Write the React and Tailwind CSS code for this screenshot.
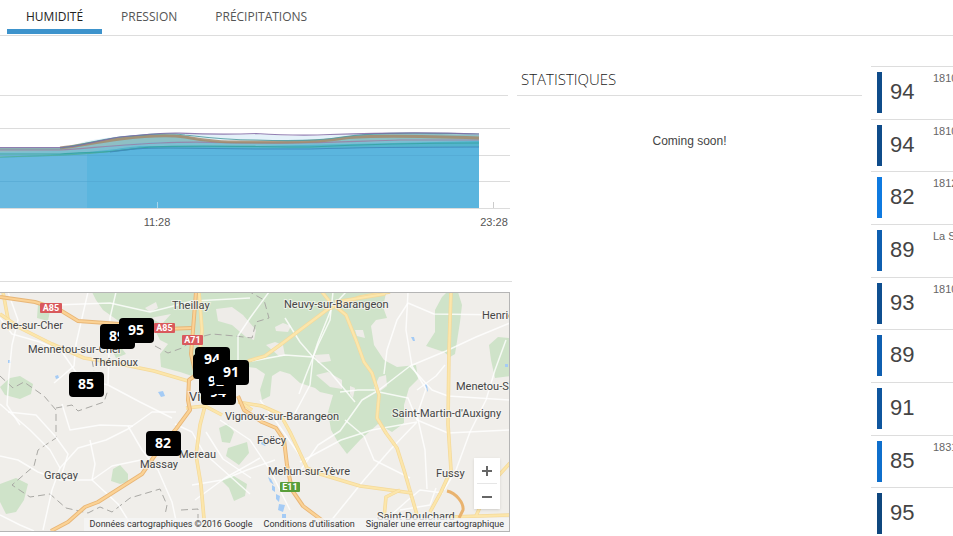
import clsx from 'clsx'

const TABS = ['Humidité', 'Pression', 'Précipitations']

const READINGS = [
  { value: 94, station: '18100 Vierzon', color: 'bg-[#0f4c8a]' },
  { value: 94, station: '18100 Vierzon', color: 'bg-[#0f4c8a]' },
  { value: 82, station: '18120 Massay', color: 'bg-[#0f7ae0]' },
  { value: 89, station: 'La Sologne', color: 'bg-[#0f5fb0]' },
  { value: 93, station: '18100 Vierzon', color: 'bg-[#0f4f90]' },
  { value: 89, station: '', color: 'bg-[#0f5fb0]' },
  { value: 91, station: '', color: 'bg-[#0f569e]' },
  { value: 85, station: '18310 Genouilly', color: 'bg-[#0f6fcc]' },
  { value: 95, station: '', color: 'bg-[#0f477e]' },
]

// Drawn in order, the last ones end up on top
const PINS = [
  { x: 193, y: 354, value: 93 },
  { x: 201, y: 380, value: 94 },
  { x: 199, y: 369, value: 92 },
  { x: 195, y: 347, value: 94 },
  { x: 214, y: 360, value: 91 },
  { x: 100, y: 324, value: 89 },
  { x: 119, y: 318, value: 95 },
  { x: 69, y: 372, value: 85 },
  { x: 146, y: 431, value: 82 },
]

const PLACES = [
  { x: 172, y: 309, name: 'Theillay' },
  { x: 284, y: 308, name: 'Neuvy-sur-Barangeon' },
  { x: 482, y: 319, name: 'Henrichemont' },
  { x: 1, y: 329, name: 'che-sur-Cher' },
  { x: 28, y: 353, name: 'Mennetou-sur-Cher' },
  { x: 93, y: 366, name: 'Thénioux' },
  { x: 456, y: 390, name: 'Menetou-Salon' },
  { x: 392, y: 417, name: "Saint-Martin-d'Auxigny" },
  { x: 225, y: 420, name: 'Vignoux-sur-Barangeon' },
  { x: 257, y: 444, name: 'Foëcy' },
  { x: 179, y: 458, name: 'Mereau' },
  { x: 140, y: 468, name: 'Massay' },
  { x: 44, y: 479, name: 'Graçay' },
  { x: 268, y: 475, name: 'Mehun-sur-Yèvre' },
  { x: 436, y: 477, name: 'Fussy' },
  { x: 377, y: 520, name: 'Saint-Doulchard' },
]

const SHIELDS = [
  { x: 40, y: 303, w: 22, name: 'A85', color: '#d9595c' },
  { x: 154, y: 323, w: 21, name: 'A85', color: '#d9595c' },
  { x: 182, y: 335, w: 21, name: 'A71', color: '#d9595c' },
  { x: 280, y: 482, w: 20, name: 'E11', color: '#5a9e3a' },
]

const FORESTS = [
  'M92 292 L190 292 L430 292 L386 293 L383 307 L387 318 L376 320 L371 326 L374 345 L384 360 L397 367 L416 365 L418 379 L409 388 L404 405 L404 423 L392 432 L378 424 L360 440 L347 454 L338 442 L331 430 L328 412 L333 395 L320 392 L315 388 L300 383 L290 374 L280 371 L272 376 L270 396 L262 400 L260 390 L265 374 L256 368 L240 366 L215 375 L195 377 L180 372 L161 367 L160 354 L168 344 L160 340 L155 330 L145 326 L120 322 L103 310 L96 300 Z',
  'M447 292 L458 292 L462 305 L460 322 L455 354 L450 357 L444 352 L426 346 L435 332 L435 310 L442 297 Z',
  'M510 338 L498 337 L489 345 L491 360 L495 378 L510 376 Z',
  'M0 387 L10 378 L20 376 L33 384 L31 394 L20 399 L5 395 Z',
  'M0 484 L16 478 L28 484 L24 500 L16 512 L6 514 L0 502 Z',
  'M113 469 L120 465 L128 474 L128 482 L120 484 L111 481 Z',
  'M219 428 L228 424 L234 432 L230 443 L222 442 Z M228 448 L247 442 L249 453 L239 465 L226 456 Z',
  'M221 480 L232 475 L247 484 L245 496 L234 501 L229 488 Z',
  'M38 304 L50 311 L48 321 L37 318 Z M111 348 L120 346 L126 354 L116 358 Z',
]

const CLEARINGS = [
  'M216 309 L232 307 L243 315 L256 330 L254 340 L246 337 L232 325 L218 321 Z',
  'M145 308 L156 302 L158 308 L150 312 Z',
  'M275 327 L283 323 L291 326 L288 332 L276 331 Z',
  'M266 345 L275 342 L283 345 L285 356 L279 356 L272 350 Z',
  'M314 355 L329 354 L331 361 L318 363 Z',
  'M316 375 L328 372 L342 380 L342 389 L330 387 Z',
  'M355 330 L363 330 L365 338 L357 336 Z',
  'M350 386 L355 388 L353 398 L350 394 Z',
  'M379 377 L386 375 L387 386 L379 392 L374 388 Z',
  'M150 318 L171 314 L162 324 Z',
]

const LOCAL_ROADS = [
  'M0 318 L12 334 L40 342 L62 352 L80 378 L108 385 L140 402 L172 418',
  'M0 404 L30 430 L50 450 L60 468 L52 490 L43 530',
  'M60 468 L78 448 L106 440 L128 429 L152 412 L176 412',
  'M128 426 L142 450 L158 470 L172 502 L178 530',
  'M0 456 L18 460 L38 472 L60 480 L92 480 L118 504 L133 528',
  'M92 480 L112 466 L141 460',
  'M0 515 L20 525 L34 531 M60 480 L68 454 L55 436 L36 415 L8 412',
  'M88 292 L82 318 L76 344 L74 366 L54 383 M116 292 L110 318 L108 384',
  'M8 292 L18 320 L12 345 L9 374 L7 405 L20 425',
  'M62 404 L70 430 L100 425 L133 426 M90 440 L95 464 L92 480',
  'M0 298 L55 305 L110 303 L150 312 L193 301 L250 298',
  'M269 292 L250 318 L238 336 L238 360 M346 292 L332 307 L318 342 L313 357 L310 385 L294 415',
  'M285 318 L300 342 L313 357 L330 372 L355 402 M252 361 L285 355 L313 357',
  'M333 292 L330 320 L318 345 L306 375 L299 394',
  'M510 323 L476 337 L446 351 L410 366 L379 390 L362 400 L340 431 L318 445 L300 471',
  'M408 292 L406 330 L412 366 L426 389 L417 415 L425 450 L427 489',
  'M408 303 L434 314 L510 315 M408 303 L397 320 L387 350 L384 374',
  'M379 392 L408 398 L417 420 L448 433 L510 430',
  'M417 422 L390 450 L364 480 L330 522 M417 422 L372 430 L341 440 L300 462',
  'M506 340 L495 370 L486 400 L470 432 L456 470 L444 490',
  'M410 366 L432 390 L448 396 L510 400 M417 390 L436 376 L445 365',
  'M220 420 L250 440 L270 470 L290 510 M195 500 L225 478 L260 458',
  'M192 485 L222 480 L247 470 L275 460 M206 432 L223 459 L251 478',
  'M340 392 L358 390 L379 390 M345 420 L364 436 L374 460 L410 478',
  'M390 516 L408 500 L420 490 L443 493 M400 510 L430 505 L436 488',
  'M175 424 L192 432 L204 453 L250 494 M260 400 L275 420 L310 470',
]

const MAIN_ROADS = [
  'M3 292 L10 330',
  'M0 314 L20 328 L52 344 L84 358 L120 364 L154 371 L188 381',
  'M199 292 L202 330 L200 350 M248 361 L265 356 L280 345 L328 309 L360 297 L390 292',
  'M335 306 L346 315 L356 340 L364 362 L372 373 L379 395 L377 418 L386 433 L397 448 L404 470 L417 515',
  'M330 302 L322 292 M335 302 L385 294',
  'M451 292 L449 350 L448 424 L451 470 L441 492 L430 512',
  'M205 406 L200 425 L196 455 L201 485 L205 530',
  'M238 402 L262 406 L280 414 L290 432 L307 468 L320 474 L360 486 L412 493',
  'M384 518 L386 497 L400 490 M510 463 L490 485 L476 516 M450 517 L510 515',
  'M186 408 L205 406 L222 415 M240 402 L252 410',
]

const HIGHWAYS = [
  'M0 297 L35 302 L60 310 L78 321 L120 324 L165 329 L192 328',
  'M196 292 L193 330 L191 354 L196 375 L189 380 L188 400 L190 410 L176 429 L160 448 L142 474 L98 502 L85 507 L68 522 L51 531',
  'M238 396 L244 410 L262 422 L276 428 L284 440 L287 465 L292 490 L303 506 L323 521',
]

const BORDERS =
  'M155 346 L168 353 L182 348 L196 338 L212 334 L235 336 L252 338 L256 322 L269 318 L264 300 L250 292 M92 360 L94 371 M0 376 L13 388 L24 382 L44 396 L56 410 L56 438 L38 450 L34 466 L12 485 L30 497 L50 494 L66 508 L88 513 L100 507 L112 512 L130 498 L160 489 L167 505 L165 515 M56 408 L72 405 L78 411 L104 402 L108 390 M181 510 L198 509 L198 520'

const HumidityChart = () => (
  <svg
    className="block h-[140px] w-full"
    viewBox="0 96 512 140"
    preserveAspectRatio="xMinYMin slice"
    role="img"
    aria-label="Humidité"
  >
    <path d="M0 128.5H510 M0 155.5H510 M0 181.5H510 M0 208.5H510" stroke="#dcdcdc" fill="none" />
    <path d="M493.5 202V208" stroke="#ccc" />

    {/* Filled area */}
    <path
      d="M0 147 L60 147 C75 146 78 143 87 141 C115 136 140 134 170 133 C200 134 225 135 256 134 C280 135 300 137 330 135 C360 133 430 132 479 134 L479 150 L0 150 Z"
      fill="#e4f1f9"
    />
    <path
      d="M0 148 L60 148 C80 147 90 141 120 137 C145 134 175 133 190 137 C210 142 225 142 250 142 C280 142 310 142 330 139 C350 136 370 133 400 133 L479 135 V208 H0 Z"
      fill="#8ebfc4"
    />
    <path
      d="M0 152 L60 151 C90 149 110 146 140 143 C170 140 200 143 256 143 C330 144 380 140 479 140 V208 H0 Z"
      fill="#7cbfd2"
    />
    <path d="M0 157 L60 154 C100 152 120 148 140 146 L256 146 L350 144 L479 141 V208 H0 Z" fill="#54b4cd" />
    <path d="M0 158 L60 156 L110 152 L140 149 L256 149 L479 147 V208 H0 Z" fill="#5bb5de" />
    <path d="M0 158 L60 156 L87 154 V208 H0 Z" fill="#69b9e0" />
    <path d="M0 155.5H479 M0 181.5H479" stroke="#4fa3cd" strokeOpacity="0.5" />
    <path d="M157.5 202V208" stroke="#a5d5ec" />

    {/* One line per station */}
    <g fill="none" strokeWidth="1.2" strokeOpacity="0.85">
      <path d="M0 157 L35 156 C80 155 100 153 140 148" stroke="#53ae9c" />
      <path d="M0 154 L60 154 C90 152 110 153 140 148 C170 144 256 147 310 147 C350 145 400 143 479 143" stroke="#35a3a0" />
      <path d="M110 152 C130 149 140 148 170 148 L256 149 L310 149 C340 148 400 147 479 147" stroke="#4188bd" />
      <path d="M0 150 L60 150 C90 148 130 144 160 143 C200 141 225 143 256 143 C320 144 360 141 400 140 L479 140" stroke="#987fa6" />
      <path d="M60 148 C80 146 90 143 120 139 C145 136 170 135 185 137 C210 142 225 142 256 142 C300 142 320 142 345 138 C370 135 420 136 479 138" stroke="#a58a6b" strokeWidth="3" />
      <path d="M60 148 C85 145 90 141 120 137 C145 135 165 132 185 135 C210 138 230 140 256 140 C310 142 330 139 350 136 C380 132 430 133 479 134" stroke="#4e9b9f" />
      <path d="M0 147.5 L60 147.5 C80 147 90 142 120 137 C140 135 160 133 175 133 C200 134 220 135 256 133.5 C280 135 300 136 330 134.5 C370 133 430 132 479 134" stroke="#8069a5" />
      <path d="M0 149 L62 149" stroke="#889999" />
    </g>

    <g className="fill-[#555] font-['Liberation_Sans',sans-serif] text-[11px]" textAnchor="middle">
      <text x="157" y="226">11:28</text>
      <text x="494" y="226">23:28</text>
    </g>
  </svg>
)

const StationMap = () => (
  <div className="relative mr-[2px] overflow-hidden border-y border-r border-[#b5b5b5] bg-[#f0eeea] font-[Roboto,sans-serif]">
    <svg
      className="block h-[238px] w-full"
      viewBox="0 293 509 238"
      preserveAspectRatio="xMinYMin slice"
      role="img"
      aria-label="Carte des stations"
    >
      <g fill="#cfe3c9">
        {FORESTS.map((d) => (
          <path key={d} d={d} />
        ))}
      </g>
      <g fill="#eeece8">
        {CLEARINGS.map((d) => (
          <path key={d} d={d} />
        ))}
      </g>
      <path
        d="M158 392 l5 -1 l2 5 l-4 1 Z M55 376 l3 -1 l1 3 l-3 1 Z M8 360 l2 0 l1 3 l-3 0 Z M411 337 l3 0 l1 4 l-2 0 Z M425 384 l2 0 l1 8 l-2 -3 Z M268 477 l3 2 l3 6 l-4 -3 Z M272 485 l3 2 l0 5 l-3 -2 Z M276 494 l4 2 l-1 6 l-3 -3 Z M279 504 l6 1 l-2 7 l-5 -2 Z M282 514 l4 0 l0 4 l-4 0 Z M262 441 l5 2 l-2 3 l-4 -2 Z M505 364 l3 0 l0 3 l-3 0 Z"
        fill="#a4cbf5"
      />
      <g fill="none" strokeLinejoin="round">
        <path d={BORDERS} stroke="#a9a8a4" strokeDasharray="7 4" />
        <g stroke="#fff" strokeWidth="1.5" strokeOpacity="0.8">
          {LOCAL_ROADS.map((d) => (
            <path key={d} d={d} />
          ))}
        </g>
        {MAIN_ROADS.map((d) => (
          <g key={d}>
            <path d={d} stroke="#f4d99a" strokeWidth="3.6" />
            <path d={d} stroke="#fce6ab" strokeWidth="2.2" />
          </g>
        ))}
        {HIGHWAYS.map((d) => (
          <g key={d}>
            <path d={d} stroke="#e8b677" strokeWidth="4" />
            <path d={d} stroke="#fbd295" strokeWidth="2.2" />
          </g>
        ))}
        <path d="M447 491 C456 493 464 503 463 510 L459 518" stroke="#e9b36f" strokeWidth="3" />
      </g>

      <g
        className="fill-[#454545] text-[11px]"
        stroke="#f7f6f3"
        strokeWidth="2"
        strokeOpacity="0.7"
        paintOrder="stroke"
      >
        {PLACES.map(({ x, y, name }) => (
          <text key={name} x={x} y={y}>
            {name}
          </text>
        ))}
        <text className="text-[13px]" x="189" y="401">
          Vierzon
        </text>
      </g>

      {SHIELDS.map(({ x, y, w, name, color }) => (
        <g key={`${name}-${x}`}>
          <rect x={x} y={y} width={w} height="10" rx="1" fill={color} />
          <text className="fill-white text-[9px] font-bold" x={x + w / 2} y={y + 8} textAnchor="middle">
            {name}
          </text>
        </g>
      ))}

      {PINS.map(({ x, y, value }) => (
        <g key={`${x}-${y}`}>
          <rect x={x} y={y} width="35" height="25" rx="4" />
          <text
            className="fill-white font-['Open_Sans',sans-serif] text-[14px] font-bold"
            x={x + 17}
            y={y + 17}
            textAnchor="middle"
          >
            {value}
          </text>
        </g>
      ))}
    </svg>

    {/* Zoom */}
    <div className="absolute right-[9px] bottom-[22px] flex flex-col items-center bg-white shadow">
      <button type="button" aria-label="Zoom avant" className="flex h-[25px] w-[26px] items-center justify-center">
        <svg className="size-[10px]" viewBox="0 0 10 10" stroke="#666" strokeWidth="2">
          <path d="M0 5H10 M5 0V10" />
        </svg>
      </button>
      <div className="h-px w-5 bg-[#e6e6e6]" />
      <button type="button" aria-label="Zoom arrière" className="flex h-[25px] w-[26px] items-center justify-center">
        <svg className="size-[10px]" viewBox="0 0 10 10" stroke="#666" strokeWidth="2">
          <path d="M0 5H10" />
        </svg>
      </button>
    </div>

    <div className="absolute right-0 bottom-0 flex gap-[11px] bg-[#f5f5f5]/80 pr-[5px] pl-[6px] text-[9px] leading-[13px] whitespace-nowrap text-[#333]">
      <span>Données cartographiques ©2016 Google</span>
      <a href="#conditions">Conditions d'utilisation</a>
      <a href="#erreur">Signaler une erreur cartographique</a>
    </div>
  </div>
)

const App = () => {
  return (
    <div className="min-h-screen overflow-hidden bg-white font-['Liberation_Sans',sans-serif] text-[#444]">
      <nav className="flex h-9 border-b border-[#ddd] pl-[7px] font-['Open_Sans',sans-serif] text-xs uppercase">
        {TABS.map((tab, index) => (
          <a
            key={tab}
            href={`#${tab}`}
            className={clsx(
              'flex h-[34px] items-center border-b-[5px] px-[19px] pt-1',
              index === 0 ? 'border-[#3d93cc] font-medium text-[#222]' : 'border-transparent text-[#555]'
            )}
          >
            {tab}
          </a>
        ))}
      </nav>

      <main className="grid grid-cols-[512fr_359fr_82fr] pt-[30px]">
        <section>
          <div className="mr-1 h-[30px] border-b border-[#ddd]" />
          <HumidityChart />
          <div className="mb-[10px] h-[46px] border-b border-[#ddd]" />
          <StationMap />
        </section>

        <section className="pr-[9px] pl-[5px]">
          <h2 className="h-[30px] border-b border-[#ddd] pl-1 font-['Open_Sans',sans-serif] text-[15px] leading-[27px] font-light text-[#222] uppercase">
            Statistiques
          </h2>
          <p className="pt-9 text-center text-xs leading-[18px]">Coming soon!</p>
        </section>

        <ul className="grid h-[474px] grid-rows-9 overflow-hidden">
          {READINGS.map(({ value, station, color }, index) => (
            <li key={index} className="flex border-t border-[#ddd] pt-[5px] pl-[6px]">
              <div className={clsx('h-[41px] w-[5px] shrink-0', color)} />
              <span className="w-[51px] shrink-0 pl-2 text-[22px] leading-10">{value}</span>
              <span className="text-[11px] leading-3 whitespace-nowrap text-[#666]">{station}</span>
            </li>
          ))}
        </ul>
      </main>
    </div>
  )
}

export default App
